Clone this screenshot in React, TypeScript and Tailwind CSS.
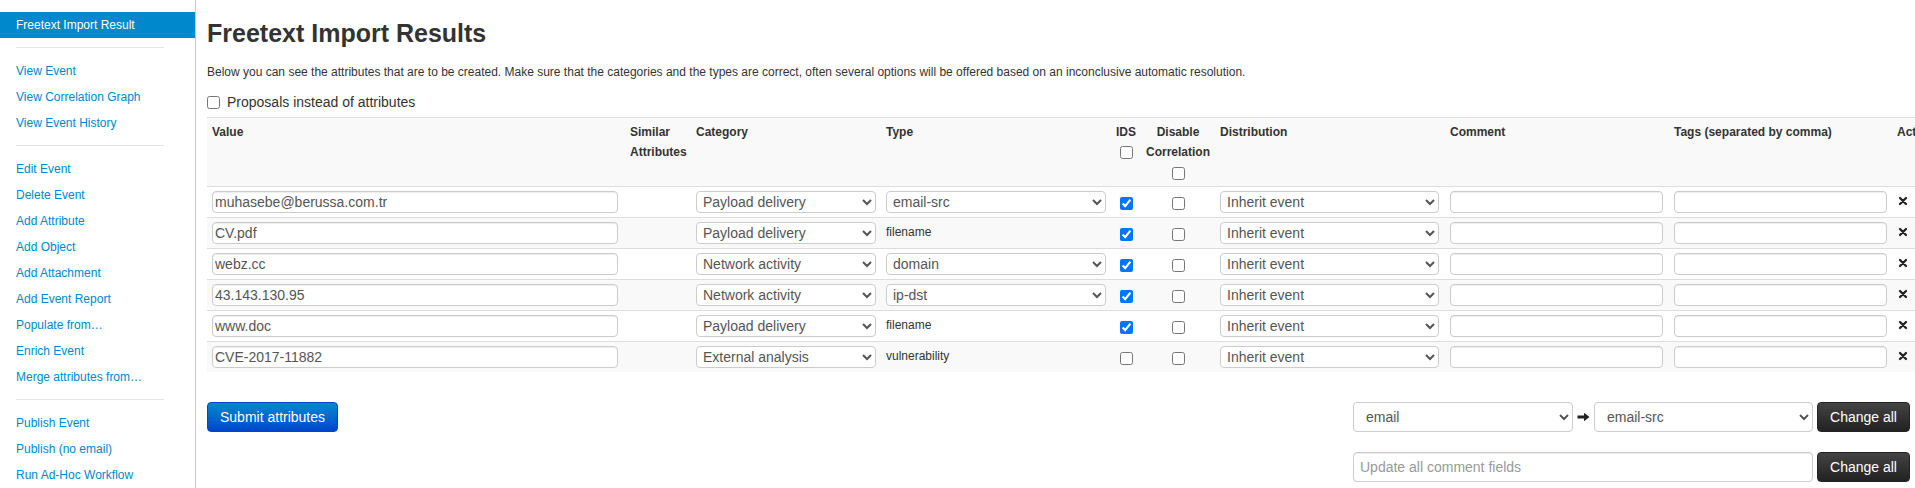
import React from 'react';

type Row = {
  value: string;
  category: string;
  type: string;
  typeOptions: boolean;
  ids: boolean;
};

const rows: Row[] = [
  { value: 'muhasebe@berussa.com.tr', category: 'Payload delivery', type: 'email-src', typeOptions: true, ids: true },
  { value: 'CV.pdf', category: 'Payload delivery', type: 'filename', typeOptions: false, ids: true },
  { value: 'webz.cc', category: 'Network activity', type: 'domain', typeOptions: true, ids: true },
  { value: '43.143.130.95', category: 'Network activity', type: 'ip-dst', typeOptions: true, ids: true },
  { value: 'www.doc', category: 'Payload delivery', type: 'filename', typeOptions: false, ids: true },
  { value: 'CVE-2017-11882', category: 'External analysis', type: 'vulnerability', typeOptions: false, ids: false },
];

const menu = [
  ['View Event', 'View Correlation Graph', 'View Event History'],
  [
    'Edit Event',
    'Delete Event',
    'Add Attribute',
    'Add Object',
    'Add Attachment',
    'Add Event Report',
    'Populate from…',
    'Enrich Event',
    'Merge attributes from…',
  ],
  ['Publish Event', 'Publish (no email)', 'Run Ad-Hoc Workflow'],
];

const inputCls =
  'block h-[22px] border border-[#ccc] rounded-[4px] bg-white text-[14px] text-[#555] px-[2px] shadow-[inset_0_1px_1px_rgba(0,0,0,0.075)] outline-none';
const selectCls = 'block h-[22px] border border-[#ccc] rounded-[4px] bg-white text-[14px] text-[#555] pl-[2px] outline-none';
const thCls = 'px-[5px] py-[4px] text-left align-top text-[12px] leading-[20px] font-bold text-[#333] border-t border-[#ddd]';
const tdCls = 'px-[5px] py-[4px] align-top border-t border-[#ddd]';
const darkBtn =
  'h-[30px] w-[93px] ml-[4px] rounded-[4px] border border-[#222] bg-linear-to-b from-[#444] to-[#222] text-white text-[14px]';

const Sidebar = () => (
  <aside className="w-[196px] shrink-0 h-full border-r border-[#ccc] bg-white pt-[12px]">
    <div className="h-[26px] leading-[26px] pl-[16px] bg-[#0088cc] text-white text-[12px]">Freetext Import Result</div>
    {menu.map((group, i) => (
      <div key={i}>
        <div className="ml-[16px] w-[148px] h-px bg-[#e5e5e5] mt-[9px] mb-[10px]" />
        {group.map((label) => (
          <a key={label} href="#" className="block h-[26px] leading-[26px] pl-[16px] text-[12px] text-[#0088cc]">
            {label}
          </a>
        ))}
      </div>
    ))}
  </aside>
);

const RemoveIcon = () => (
  <svg width="10" height="10" viewBox="0 0 10 10" className="block mt-[5px] ml-[1px]">
    <path d="M2 2 L8 8 M8 2 L2 8" stroke="#222" strokeWidth="2.3" strokeLinecap="round" />
  </svg>
);

const ArrowIcon = () => (
  <svg width="13" height="10" viewBox="0 0 13 10" className="mx-[4px] shrink-0">
    <path d="M0.5 3.6 H7 V0.8 L12.5 5 L7 9.2 V6.4 H0.5 Z" fill="#222" />
  </svg>
);

const Checkbox = ({ checked = false, className = '' }: { checked?: boolean; className?: string }) => (
  <input type="checkbox" defaultChecked={checked} className={`block w-[13px] h-[13px] m-0 ${className}`} />
);

export default function App() {
  return (
    <div className="flex w-full h-screen overflow-hidden bg-white font-['Liberation_Sans',Arial,sans-serif] text-[#333]">
      <Sidebar />

      <main className="flex-1 min-w-0 pl-[11px] pr-[5px]">
        <h2 className="mt-[18px] text-[25px] leading-[30px] font-bold text-[#333]">Freetext Import Results</h2>
        <p className="mt-[14px] text-[12px] leading-[20px]">
          Below you can see the attributes that are to be created. Make sure that the categories and the types are correct,
          often several options will be offered based on an inconclusive automatic resolution.
        </p>
        <label className="mt-[10px] flex items-center h-[20px] text-[14px]">
          <Checkbox className="mr-[7px]" />
          Proposals instead of attributes
        </label>

        <table className="mt-[5px] table-fixed border-collapse w-[1739px]">
          <thead>
            <tr className="bg-[#f9f9f9]">
              <th className={`${thCls} w-[418px]`}>Value</th>
              <th className={`${thCls} w-[66px]`}>
                Similar
                <br />
                Attributes
              </th>
              <th className={`${thCls} w-[190px]`}>Category</th>
              <th className={`${thCls} w-[230px]`}>Type</th>
              <th className={`${thCls} w-[30px] !text-center`}>
                IDS
                <Checkbox className="mx-auto mt-[4px] mb-[3px]" />
              </th>
              <th className={`${thCls} w-[74px] !text-center`}>
                Disable
                <br />
                Correlation
                <Checkbox className="mx-auto mt-[5px] mb-[2px]" />
              </th>
              <th className={`${thCls} w-[230px]`}>Distribution</th>
              <th className={`${thCls} w-[224px]`}>Comment</th>
              <th className={`${thCls} w-[223px]`}>Tags (separated by comma)</th>
              <th className={`${thCls} w-[54px]`}>Actions</th>
            </tr>
          </thead>
          <tbody>
            {rows.map((r, i) => (
              <tr key={r.value} className={i % 2 === 1 ? 'bg-[#f9f9f9]' : 'bg-white'}>
                <td className={tdCls}>
                  <input className={`${inputCls} w-[406px]`} defaultValue={r.value} />
                </td>
                <td className={tdCls} />
                <td className={tdCls}>
                  <select className={`${selectCls} w-[180px]`} defaultValue={r.category}>
                    <option>{r.category}</option>
                  </select>
                </td>
                <td className={tdCls}>
                  {r.typeOptions ? (
                    <select className={`${selectCls} w-[220px]`} defaultValue={r.type}>
                      <option>{r.type}</option>
                    </select>
                  ) : (
                    <span className="block text-[12px] leading-[20px] text-[#333]">{r.type}</span>
                  )}
                </td>
                <td className={tdCls}>
                  <Checkbox checked={r.ids} className="mx-auto mt-[6px]" />
                </td>
                <td className={tdCls}>
                  <Checkbox className="mx-auto mt-[6px]" />
                </td>
                <td className={tdCls}>
                  <select className={`${selectCls} w-[219px]`} defaultValue="Inherit event">
                    <option>Inherit event</option>
                  </select>
                </td>
                <td className={tdCls}>
                  <input className={`${inputCls} w-[213px]`} />
                </td>
                <td className={tdCls}>
                  <input className={`${inputCls} w-[213px]`} />
                </td>
                <td className={tdCls}>
                  <RemoveIcon />
                </td>
              </tr>
            ))}
          </tbody>
        </table>

        <div className="mt-[30px] flex justify-between items-start">
          <button className="h-[30px] px-[12px] rounded-[4px] border border-[#0044cc] bg-linear-to-b from-[#0088cc] to-[#0044cc] text-white text-[14px]">
            Submit attributes
          </button>

          <div className="flex flex-col gap-[20px]">
            <div className="flex items-center">
              <select className={`${selectCls} !h-[30px] w-[220px] pl-[8px]`} defaultValue="email">
                <option>email</option>
              </select>
              <ArrowIcon />
              <select className={`${selectCls} !h-[30px] w-[219px] pl-[8px]`} defaultValue="email-src">
                <option>email-src</option>
              </select>
              <button className={darkBtn}>Change all</button>
            </div>
            <div className="flex items-center">
              <input
                className={`${inputCls} !h-[30px] w-[460px] !px-[6px] placeholder:text-[#999]`}
                placeholder="Update all comment fields"
              />
              <button className={darkBtn}>Change all</button>
            </div>
          </div>
        </div>
      </main>
    </div>
  );
}
